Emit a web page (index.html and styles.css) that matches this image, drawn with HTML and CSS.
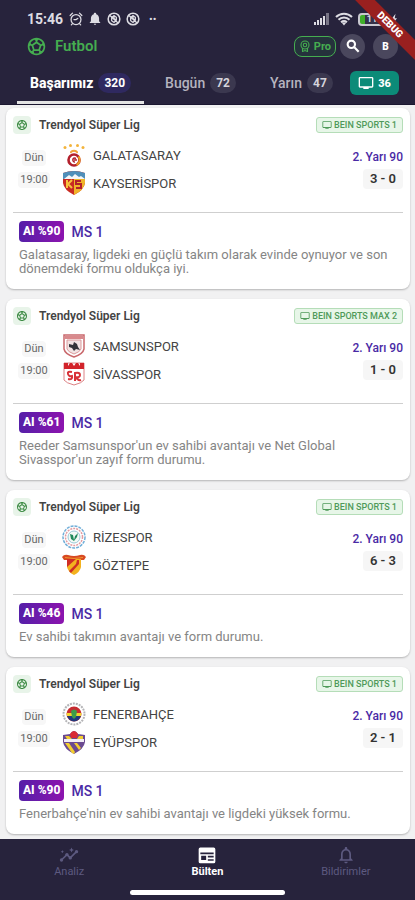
FILE: index.html
```html
<!DOCTYPE html>
<html lang="tr">
<head>
	<meta charset="UTF-8">
	<meta name="viewport" content="width=device-width, initial-scale=1.0">
	<title>Futbol - Bülten</title>
	<link rel="stylesheet" href="styles.css">
</head>
<body>

	<!-- shared icons -->
	<svg class="sprite" aria-hidden="true">
		<symbol id="i-ball" viewBox="0 0 24 24">
			<path fill="currentColor" d="M12 2C6.48 2 2 6.48 2 12s4.48 10 10 10 10-4.48 10-10S17.52 2 12 2zm1 3.3 1.35-.95c1.82.56 3.37 1.76 4.38 3.34l-.39 1.34-1.35.46L13 6.7V5.3zm-3.35-.95L11 5.3v1.4L7.01 9.49l-1.35-.46-.39-1.34c1.01-1.57 2.56-2.77 4.38-3.34zM7.08 17.11l-1.14.1C4.73 15.81 4 13.99 4 12c0-.12.01-.23.02-.35l1-.73 1.38.48 1.46 4.34-.78 1.37zm7.42 2.48c-.79.26-1.63.41-2.5.41s-1.71-.15-2.5-.41l-.69-1.49.64-1.1h5.11l.64 1.11-.7 1.48zM14.27 15H9.73l-1.35-4.02L12 8.44l3.63 2.54L14.27 15zm3.79 2.21-1.14-.1-.79-1.37 1.46-4.34 1.39-.47 1 .73c.01.11.02.22.02.34 0 1.99-.73 3.81-1.94 5.21z"/>
		</symbol>
		<symbol id="i-tv" viewBox="0 0 24 24">
			<path fill="currentColor" d="M21 3H3c-1.1 0-2 .9-2 2v12c0 1.1.9 2 2 2h5v2h8v-2h5c1.1 0 2-.9 2-2V5c0-1.1-.9-2-2-2zm0 14H3V5h18v12z"/>
		</symbol>
		<symbol id="i-noball" viewBox="0 0 24 24">
			<circle cx="12" cy="12" r="10" fill="none" stroke="currentColor" stroke-width="2.6"/>
			<path d="M8 15V10l4-4 4 3v5l-4 4zM5 6l14 13M12 6v5l4 3" fill="none" stroke="currentColor" stroke-width="2.2"/>
		</symbol>
	</svg>

	<header class="top">
		<div class="status">
			<span class="clock">15:46</span>
			<svg class="ic14" viewBox="0 0 24 24"><g fill="none" stroke="currentColor" stroke-width="2.2" stroke-linecap="round"><circle cx="12" cy="13" r="8.5"/><path d="M2 6l4-4M22 6l-4-4M8.5 13H12l3-2M6 20l-2 2M18 20l2 2"/></g></svg>
			<svg class="ic14" viewBox="0 0 24 24"><path fill="currentColor" d="M12 22c1.1 0 2-.9 2-2h-4c0 1.1.9 2 2 2zm7-6v-5c0-3.5-2-6-5-7V3c0-2.5-4-2.5-4 0v1c-3 1-5 3.5-5 7v5l-2 2v1h18v-1z"/></svg>
			<svg class="ic14"><use href="#i-noball"/></svg>
			<svg class="ic14"><use href="#i-noball"/></svg>
			<span class="dots">••</span>
			<svg class="signal" viewBox="0 0 16 12"><g fill="currentColor"><rect x="0" y="9" width="2" height="3"/><rect x="3" y="7" width="2" height="5"/><rect x="6" y="5" width="2" height="7"/><rect x="9" y="3" width="2" height="9"/><rect x="12" y="0" width="3" height="12" opacity=".45"/></g></svg>
			<svg class="wifi" viewBox="0 0 18 14"><g fill="none" stroke="currentColor" stroke-width="2"><path d="M1 5c4.5-4.5 11.5-4.5 16 0M3.5 7.7c3-3 8-3 11 0M6 10.3c2-1.6 4-1.6 6 0"/></g><path d="M9 13.5l-2.4-3h4.8z" fill="currentColor"/></svg>
			<span class="battery">11</span>
			<svg class="bolt" viewBox="0 0 8 14"><path d="M6 0L0 8h3l-1 6 6-8H5z" fill="currentColor"/></svg>
		</div>

		<div class="appbar">
			<svg class="ball"><use href="#i-ball"/></svg>
			<h1>Futbol</h1>
			<button type="button" class="pro">
				<svg class="ic12" viewBox="0 0 24 24"><g fill="none" stroke="currentColor" stroke-width="2.2"><circle cx="12" cy="10" r="8"/><circle cx="12" cy="10" r="3.5"/><path d="M7 16v7l5-2 5 2v-7"/></g></svg>
				Pro
			</button>
			<button type="button" class="round" aria-label="Ara">
				<svg class="ic16" viewBox="0 0 24 24"><g fill="none" stroke="currentColor" stroke-width="3.2"><circle cx="9.5" cy="9.5" r="5.5"/><path d="M14 14l6.5 6.5"/></g></svg>
			</button>
			<button type="button" class="round">B</button>
		</div>

		<nav class="tabs">
			<button type="button" class="tab active">Başarımız <span class="count">320</span></button>
			<button type="button" class="tab">Bugün <span class="count">72</span></button>
			<button type="button" class="tab">Yarın <span class="count">47</span></button>
			<button type="button" class="live"><svg class="ic16"><use href="#i-tv"/></svg>36</button>
		</nav>

		<span class="debug">DEBUG</span>
	</header>

	<main class="list">

		<article class="card">
			<div class="league">
				<span class="league-icon"><svg class="ic12"><use href="#i-ball"/></svg></span>
				<h2>Trendyol Süper Lig</h2>
				<span class="channel"><svg class="ic10"><use href="#i-tv"/></svg>BEIN SPORTS 1</span>
			</div>
			<div class="match">
				<div class="when"><span>Dün</span><span>19:00</span></div>
				<div class="teams">
					<div class="team">
						<svg class="crest" viewBox="0 0 24 24">
							<g fill="#f3b43c"><circle cx="3" cy="4.5" r="1.5"/><circle cx="8.5" cy="2.5" r="1.5"/><circle cx="15.5" cy="2.5" r="1.5"/><circle cx="21" cy="4.5" r="1.5"/></g>
							<path d="M9 10c-1-3 7-3 6 0" fill="none" stroke="#f0a23a" stroke-width="2"/>
							<circle cx="12" cy="17" r="5.5" fill="#fff" stroke="#b3202c" stroke-width="2.6"/>
							<path d="M16.5 13.5a5.5 5.5 0 0 1-2 8.5" fill="none" stroke="#ef9d25" stroke-width="2"/>
							<path d="M14 15.5c-4-2-4 4-1 3.5M12 17h3" fill="none" stroke="#b3202c" stroke-width="1.5"/>
						</svg>
						GALATASARAY
					</div>
					<div class="team">
						<svg class="crest" viewBox="0 0 24 24">
							<path d="M1 2q11-4 22 0v10q-1 7-11 12Q2 19 1 12z" fill="#c92a22"/>
							<path d="M12 8h11v4q-1 7-11 12z" fill="#f0b429"/>
							<path d="M1 2q11-4 22 0v6H1z" fill="#4f8fba"/>
							<path d="M2 8l5-4 3 2 3-3 4 3 2-1 4 3z" fill="#f4f6f8"/>
							<path d="M5 9v8M10 9l-4 4 4 4" fill="none" stroke="#f6c23c" stroke-width="2"/>
							<path d="M19 10h-5v3h5v4h-5" fill="none" stroke="#b3202c" stroke-width="2"/>
						</svg>
						KAYSERİSPOR
					</div>
				</div>
				<div class="result"><span class="period">2. Yarı 90</span><span class="score">3 - 0</span></div>
			</div>
			<div class="tip">
				<div class="tip-head"><span class="ai">AI %90</span><strong>MS 1</strong></div>
				<p>Galatasaray, ligdeki en güçlü takım olarak evinde oynuyor ve son dönemdeki formu oldukça iyi.</p>
			</div>
		</article>

		<article class="card">
			<div class="league">
				<span class="league-icon"><svg class="ic12"><use href="#i-ball"/></svg></span>
				<h2>Trendyol Süper Lig</h2>
				<span class="channel"><svg class="ic10"><use href="#i-tv"/></svg>BEIN SPORTS MAX 2</span>
			</div>
			<div class="match">
				<div class="when"><span>Dün</span><span>19:00</span></div>
				<div class="teams">
					<div class="team">
						<svg class="crest" viewBox="0 0 24 24">
							<path d="M2 1h20v14q-1 5-10 8Q3 20 2 15z" fill="#fff" stroke="#c9686c" stroke-width="1.5"/>
							<path d="M3 2h18v3H3z" fill="#d9898c"/>
							<path d="M5 6v9q1 3 7 5 6-2 7-5V6z" fill="#f1e3e3" stroke="#dc9a9c"/>
							<path d="M7 10l4 1 1-3 3 2 1 3 2 3-4-1-2 2-2-3-3-1z" fill="#33343a"/>
						</svg>
						SAMSUNSPOR
					</div>
					<div class="team">
						<svg class="crest" viewBox="0 0 24 24">
							<path d="M2 1h20v17q-2 3-10 5-8-2-10-5z" fill="#fff" stroke="#dc8285"/>
							<path d="M2 1h4v3l2-3h2l2 3 2-3h2l2 3V1h4v6H2z" fill="#d2232a"/>
							<path d="M10 10q-5-1-4 2t4 2q1 4-4 3M13 19v-8q5-1 5 2t-5 2M14 15q2 4 5 3" fill="none" stroke="#d83238" stroke-width="2"/>
						</svg>
						SİVASSPOR
					</div>
				</div>
				<div class="result"><span class="period">2. Yarı 90</span><span class="score">1 - 0</span></div>
			</div>
			<div class="tip">
				<div class="tip-head"><span class="ai">AI %61</span><strong>MS 1</strong></div>
				<p>Reeder Samsunspor'un ev sahibi avantajı ve Net Global Sivasspor'un zayıf form durumu.</p>
			</div>
		</article>

		<article class="card">
			<div class="league">
				<span class="league-icon"><svg class="ic12"><use href="#i-ball"/></svg></span>
				<h2>Trendyol Süper Lig</h2>
				<span class="channel"><svg class="ic10"><use href="#i-tv"/></svg>BEIN SPORTS 1</span>
			</div>
			<div class="match">
				<div class="when"><span>Dün</span><span>19:00</span></div>
				<div class="teams">
					<div class="team">
						<svg class="crest" viewBox="0 0 24 24">
							<circle cx="12" cy="12" r="11" fill="#fff" stroke="#70aed8" stroke-width="1.5" stroke-dasharray="3 1"/>
							<circle cx="12" cy="12" r="8.5" fill="none" stroke="#e29ba0" stroke-width="1.5" stroke-dasharray="2 1"/>
							<circle cx="12" cy="12" r="6" fill="#f2faf6" stroke="#9ac9d8"/>
							<path d="M8 9l3 1 1 5 1-4 3-3-1 4-3 4-3-2z" fill="#1f8a5b"/>
						</svg>
						RİZESPOR
					</div>
					<div class="team">
						<svg class="crest" viewBox="0 0 24 24">
							<path d="M0 4q2-3 6-2 6 2 12 0 4-1 6 2l-2 3H2z" fill="#d84a23"/>
							<path d="M5 6h14v8q-1 5-7 8-6-3-7-8z" fill="#f3b21f"/>
							<path d="M5 6h9l-9 8zM15 7h2v4L9 20l-2-2 7-7z" fill="#cf2d25"/>
							<path d="M3 4.5q9 2 18 0" fill="none" stroke="#f0952d"/>
						</svg>
						GÖZTEPE
					</div>
				</div>
				<div class="result"><span class="period">2. Yarı 90</span><span class="score">6 - 3</span></div>
			</div>
			<div class="tip">
				<div class="tip-head"><span class="ai">AI %46</span><strong>MS 1</strong></div>
				<p>Ev sahibi takımın avantajı ve form durumu.</p>
			</div>
		</article>

		<article class="card">
			<div class="league">
				<span class="league-icon"><svg class="ic12"><use href="#i-ball"/></svg></span>
				<h2>Trendyol Süper Lig</h2>
				<span class="channel"><svg class="ic10"><use href="#i-tv"/></svg>BEIN SPORTS 1</span>
			</div>
			<div class="match">
				<div class="when"><span>Dün</span><span>19:00</span></div>
				<div class="teams">
					<div class="team">
						<svg class="crest" viewBox="0 0 24 24">
							<circle cx="12" cy="12" r="10.5" fill="#fff" stroke="#b5b5b8" stroke-width="2" stroke-dasharray="2 1"/>
							<circle cx="12" cy="12" r="7.5" fill="#c62b30"/>
							<path d="M4.500 11h15l-.5 3H5z" fill="#f3d42e"/>
							<path d="M5 14h14q-2 5-7 5.500Q7 19 5 14z" fill="#203a7c"/>
							<path d="M9 9q3-3 6 0l-1 6-2 2-2-2z" fill="#3c9b48"/>
						</svg>
						FENERBAHÇE
					</div>
					<div class="team">
						<svg class="crest" viewBox="0 0 24 24">
							<path d="M1 5l7-1q4-6 8 0l7 1v7q-1 7-11 12Q2 19 1 12z" fill="#6b4a91"/>
							<path d="M8 4q4-6 8 0l-1 4H9z" fill="#d92b35"/>
							<path d="M2 9h20v3H2z" fill="#f2edf5"/>
							<path d="M3 13l7 10 2 1 1-2-6-9zM12 13l5 7 2-2-4-5zM3 6h4l3 3H5zM17 6h4v3h-6z" fill="#f2cd30"/>
						</svg>
						EYÜPSPOR
					</div>
				</div>
				<div class="result"><span class="period">2. Yarı 90</span><span class="score">2 - 1</span></div>
			</div>
			<div class="tip">
				<div class="tip-head"><span class="ai">AI %90</span><strong>MS 1</strong></div>
				<p>Fenerbahçe'nin ev sahibi avantajı ve ligdeki yüksek formu.</p>
			</div>
		</article>

	</main>

	<footer class="bottom">
		<nav class="bottom-nav">
			<a href="#analiz">
				<svg class="ic20" viewBox="0 0 24 24"><path d="M3 18l6.5-6.5 4 4L21 8" fill="none" stroke="currentColor" stroke-width="2"/><g fill="currentColor"><circle cx="3" cy="18" r="2"/><circle cx="9.5" cy="11.5" r="2"/><circle cx="13.5" cy="15.5" r="2"/><circle cx="21" cy="8" r="2"/><path d="M15 3l.9 2.1L18 6l-2.1.9L15 9l-.9-2.1L12 6l2.1-.9zM4 6l.6 1.4L6 8l-1.4.6L4 10l-.6-1.4L2 8l1.4-.6z"/></g></svg>
				Analiz
			</a>
			<a href="#bulten" class="active">
				<svg class="ic20" viewBox="0 0 24 24"><path fill="currentColor" fill-rule="evenodd" d="M4 3h16q2 0 2 2v15q0 2-2 2H4q-2 0-2-2V5q0-2 2-2zm0 6v2h16V9zm1 4v5h6v-5zm8 0v2h7v-2zm0 4v2h7v-2z"/></svg>
				Bülten
			</a>
			<a href="#bildirimler">
				<svg class="ic20" viewBox="0 0 24 24"><path fill="currentColor" d="M12 22c1.1 0 2-.9 2-2h-4c0 1.1.9 2 2 2zm6-6v-5c0-3.07-1.63-5.64-4.5-6.32V4c0-.83-.67-1.5-1.5-1.5s-1.5.67-1.5 1.5v.68C7.64 5.36 6 7.92 6 11v5l-2 2v1h16v-1l-2-2zm-2 1H8v-6c0-2.48 1.51-4.5 4-4.5s4 2.02 4 4.5v6z"/></svg>
				Bildirimler
			</a>
		</nav>
		<div class="home-bar"></div>
	</footer>

</body>
</html>
```

FILE: styles.css
```css
:root{
	font-family: Roboto, "Noto Sans", sans-serif;
	--dark: #27233c;
	--green: #45ad50;
	--violet: #4a2aa5;
}

*{
	box-sizing: border-box;
}

body{
	margin: 0;
	min-height: 100vh;
	display: flex;
	flex-direction: column;
	background-color: #f1f1f2;
}

h1, h2, p{
	margin: 0;
}

button{
	border: 0;
	padding: 0;
	background: none;
	color: inherit;
	font: inherit;
}

svg{
	display: block;
	flex: none;
}

.sprite{
	position: absolute;
	width: 0;
	height: 0;
}

.ic10{ width: 10px; height: 10px; }
.ic12{ width: 12px; height: 12px; }
.ic14{ width: 14px; height: 14px; }
.ic16{ width: 16px; height: 16px; }
.ic20{ width: 20px; height: 20px; }

/* header */

.top{
	position: relative;
	overflow: hidden;
	background-color: var(--dark);
	color: #fff;
	border-bottom: 1px solid #1b1730;
}

.status{
	display: flex;
	align-items: center;
	gap: 5px;
	height: 22px;
	margin-top: 8px;
	padding: 0 18px 0 27px;
	color: #dddce3;
}

.clock{
	margin-right: 1px;
	font-size: 14px;
	font-weight: 700;
}

.dots{
	margin-left: 4px;
	font-size: 11px;
}

.signal{
	width: 16px;
	height: 12px;
	margin-left: auto;
}

.wifi{
	width: 18px;
	height: 14px;
}

.battery{
	width: 28px;
	height: 13px;
	border: 2px solid #c9c8d0;
	border-radius: 4px;
	background: linear-gradient(90deg, #3fae2a 5px, #35324a 5px);
	font-size: 9px;
	font-weight: 700;
	line-height: 9px;
	text-align: center;
}

.bolt{
	width: 6px;
	height: 12px;
}

.appbar{
	display: flex;
	align-items: center;
	height: 32px;
	padding: 0 17px 0 26px;
}

.ball{
	width: 21px;
	height: 21px;
	color: var(--green);
}

h1{
	margin: 0 auto 0 8px;
	font-size: 15px;
	font-weight: 600;
	color: var(--green);
}

.pro{
	display: flex;
	align-items: center;
	gap: 3px;
	height: 21px;
	padding: 0 4px;
	border: 1px solid var(--green);
	border-radius: 8px;
	background-color: #25323c;
	color: var(--green);
	font-size: 11px;
	font-weight: 700;
}

.round{
	display: flex;
	align-items: center;
	justify-content: center;
	width: 25px;
	height: 25px;
	margin-left: 4px;
	border-radius: 50%;
	background-color: #4a475d;
	font-size: 10px;
	font-weight: 900;
}

.round + .round{
	margin-left: 8px;
}

.tabs{
	display: flex;
	align-items: center;
	height: 42px;
	padding: 0 16px 0 17px;
}

.tab{
	display: flex;
	align-items: center;
	gap: 5px;
	height: 42px;
	margin-right: 8px;
	padding: 0 13px;
	border-top: 3px solid transparent;
	border-bottom: 3px solid transparent;
	color: #b5b3bf;
	font-size: 14px;
	font-weight: 500;
}

.tab.active{
	border-bottom-color: #e4e4e4;
	color: #fff;
	font-weight: 800;
}

.tab:nth-child(3){
	margin-right: 0;
}

.count{
	height: 20px;
	padding: 0 6px;
	border-radius: 10px;
	background-color: #3b384f;
	color: #d5d4db;
	font-size: 12px;
	font-weight: 700;
	line-height: 20px;
}

.active .count{
	background-color: #2f2960;
	color: #fff;
}

.live{
	display: flex;
	align-items: center;
	justify-content: center;
	gap: 4px;
	width: 49px;
	height: 24px;
	margin-left: auto;
	border-radius: 6px;
	background-color: #0c8b78;
	font-size: 11px;
	font-weight: 800;
}

.debug{
	position: absolute;
	top: 18px;
	right: -45px;
	width: 140px;
	height: 14px;
	transform: rotate(45deg);
	background-color: #99201f;
	font-size: 10px;
	font-weight: 900;
	line-height: 14px;
	text-align: center;
}

/* match list */

.list{
	flex: 1;
	display: flex;
	flex-direction: column;
	gap: 10px;
	padding: 3px 5px 5px 6px;
}

.card{
	padding: 8px 7px 13px;
	border-radius: 8px;
	background-color: #fff;
	box-shadow: 0 1px 2px rgba(0, 0, 0, .25);
}

.league{
	display: flex;
	align-items: center;
	height: 18px;
}

.league-icon{
	display: grid;
	place-items: center;
	width: 18px;
	height: 18px;
	border-radius: 4px;
	background-color: #e8f4e9;
	color: #3d8b44;
}

h2{
	margin: 0 auto 0 8px;
	font-size: 12px;
	font-weight: 600;
	color: #444;
}

.channel{
	display: flex;
	align-items: center;
	gap: 2px;
	height: 16px;
	padding: 0 5px;
	border: 1px solid #b5ddb8;
	border-radius: 3px;
	background-color: #e7f6e8;
	color: #4f9a59;
	font-size: 9px;
	font-weight: 500;
}

.match{
	display: flex;
	align-items: center;
	padding: 9px 0 17px 5px;
	border-bottom: 1px solid #cfcfcf;
}

.when{
	display: flex;
	flex-direction: column;
	align-items: center;
	gap: 6px;
	width: 32px;
	margin-right: 12px;
	color: #666;
	font-size: 11px;
	line-height: 16px;
}

.when span{
	padding: 0 2px;
	border-radius: 4px;
	background-color: #f7f7f7;
}

.teams{
	flex: 1;
	display: flex;
	flex-direction: column;
	gap: 4px;
}

.team{
	display: flex;
	align-items: center;
	gap: 7px;
	font-size: 13px;
	color: #444;
}

.crest{
	width: 24px;
	height: 24px;
}

.result{
	display: flex;
	flex-direction: column;
	align-items: flex-end;
	gap: 4px;
}

.period{
	color: var(--violet);
	font-size: 12px;
	font-weight: 500;
	line-height: 16px;
}

.score{
	min-width: 40px;
	border-radius: 4px;
	background-color: #f6f6f6;
	color: #333;
	font-size: 13px;
	font-weight: 600;
	line-height: 20px;
	text-align: center;
}

.tip{
	padding: 8px 6px 0;
}

.tip-head{
	display: flex;
	align-items: center;
	gap: 7px;
	margin-bottom: 6px;
	color: var(--violet);
	font-size: 14px;
}

.tip-head strong{
	font-weight: 500;
}

.ai{
	padding: 0 4px;
	border-radius: 4px;
	background: linear-gradient(90deg, #551fa8, #8c14ae);
	color: #fff;
	font-size: 12px;
	font-weight: 800;
	line-height: 21px;
}

.tip p{
	color: #858585;
	font-size: 13px;
	line-height: 14px;
}

/* bottom navigation */

.bottom{
	height: 61px;
	background-color: var(--dark);
}

.bottom-nav{
	display: grid;
	grid-template-columns: repeat(3, 1fr);
	padding-top: 6px;
}

.bottom-nav a{
	display: flex;
	flex-direction: column;
	align-items: center;
	color: #5d5a80;
	font-size: 11px;
	line-height: 13px;
	text-decoration: none;
}

.bottom-nav a.active{
	color: #fff;
	font-weight: 700;
}

.home-bar{
	width: 155px;
	height: 5px;
	margin: 12px auto 0;
	border-radius: 3px;
	background-color: #fff;
}
```
